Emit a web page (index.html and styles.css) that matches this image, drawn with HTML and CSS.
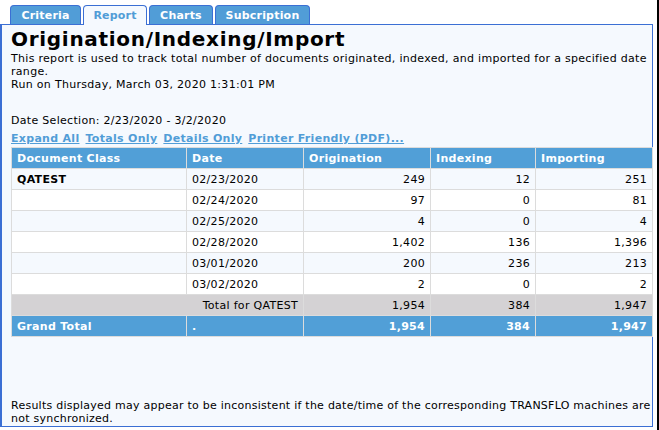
FILE: index.html
```html
<!DOCTYPE html>
<html>
<head>
<meta charset="utf-8">
<link rel="stylesheet" href="styles.css">
</head>
<body>
<div class="window">
  <div class="tabs">
    <div class="tab">Criteria</div>
    <div class="tab active">Report</div>
    <div class="tab">Charts</div>
    <div class="tab">Subcription</div>
  </div>
  <div class="panel">
    <h1 class="title">Origination/Indexing/Import</h1>
    <p class="desc">This report is used to track total number of documents originated, indexed, and imported for a specified date range.<br>Run on Thursday, March 03, 2020 1:31:01 PM</p>
    <p class="selection">Date Selection: 2/23/2020 - 3/2/2020</p>
    <div class="links">
      <a href="#">Expand All</a>
      <a href="#">Totals Only</a>
      <a href="#">Details Only</a>
      <a href="#">Printer Friendly (PDF)...</a>
    </div>
    <table class="grid">
      <colgroup>
        <col class="c1"><col class="c2"><col class="c3"><col class="c4"><col class="c5">
      </colgroup>
      <thead>
        <tr><th>Document Class</th><th>Date</th><th>Origination</th><th>Indexing</th><th>Importing</th></tr>
      </thead>
      <tbody>
        <tr class="alt"><td class="cls">QATEST</td><td>02/23/2020</td><td class="num">249</td><td class="num">12</td><td class="num">251</td></tr>
        <tr><td></td><td>02/24/2020</td><td class="num">97</td><td class="num">0</td><td class="num">81</td></tr>
        <tr class="alt"><td></td><td>02/25/2020</td><td class="num">4</td><td class="num">0</td><td class="num">4</td></tr>
        <tr><td></td><td>02/28/2020</td><td class="num">1,402</td><td class="num">136</td><td class="num">1,396</td></tr>
        <tr class="alt"><td></td><td>03/01/2020</td><td class="num">200</td><td class="num">236</td><td class="num">213</td></tr>
        <tr><td></td><td>03/02/2020</td><td class="num">2</td><td class="num">0</td><td class="num">2</td></tr>
        <tr class="subtotal"><td colspan="2" class="num">Total for QATEST</td><td class="num">1,954</td><td class="num">384</td><td class="num">1,947</td></tr>
        <tr class="grand"><td>Grand Total</td><td>.</td><td class="num">1,954</td><td class="num">384</td><td class="num">1,947</td></tr>
      </tbody>
    </table>
    <div class="spacer"></div>
    <p class="note">Results displayed may appear to be inconsistent if the date/time of the corresponding TRANSFLO machines are not synchronized.</p>
  </div>
</div>
</body>
</html>
```

FILE: styles.css
```css
html, body {
  margin: 0;
  padding: 0;
  background: #ffffff;
}
body {
  font-family: "DejaVu Sans", Verdana, sans-serif;
  font-size: 11px;
  letter-spacing: 0.3px;
  color: #000;
}
.window {
  width: 657px;
  height: 430px;
  border-right: 2px solid #000;
  display: flex;
  flex-direction: column;
}
.tabs {
  display: flex;
  align-items: flex-start;
  gap: 2px;
  padding: 5px 0 0 10px;
  height: 25px;
  box-sizing: border-box;
  margin-bottom: -1px;
  position: relative;
  z-index: 1;
}
.tab {
  height: 19px;
  box-sizing: border-box;
  padding: 2px 0 0 0;
  text-align: center;
  background: #519dd7;
  border: 1px solid #3b6fd4;
  border-bottom: none;
  border-radius: 4px 4px 0 0;
  color: #fff;
  font-weight: bold;
  line-height: 16px;
  letter-spacing: 0.2px;
}
.tab:nth-child(1) { width: 71px; }
.tab:nth-child(2) { width: 64px; }
.tab:nth-child(3) { width: 64px; }
.tab:nth-child(4) { width: 95px; }
.tab.active {
  background: #f5f9fe;
  color: #519dd7;
  height: 20px;
}
.panel {
  width: 653px;
  height: 403px;
  box-sizing: border-box;
  border: 1px solid #3b6fd4;
  border-left-width: 2px;
  background: #f5f9fe;
  padding: 0 0 0 9px;
  display: flex;
  flex-direction: column;
}
.title {
  margin: 2px 0 0 0;
  font-size: 20px;
  line-height: 25px;
  font-weight: bold;
  letter-spacing: 0.7px;
}
.desc {
  margin: 0;
  line-height: 13px;
  padding-right: 2px;
}
.selection {
  margin: 23px 0 0 0;
  line-height: 13px;
}
.links {
  display: flex;
  gap: 6px;
  margin-top: 5px;
  line-height: 13px;
}
.links a {
  color: #519dd7;
  font-weight: bold;
  text-decoration: underline;
}
.grid {
  margin-top: 2px;
  width: 641px;
  border-collapse: collapse;
  table-layout: fixed;
  border: 1px solid #dcdcdc;
}
.c1 { width: 175px; }
.c2 { width: 117px; }
.c3 { width: 127px; }
.c4 { width: 105px; }
.c5 { width: 117px; }
.grid th, .grid td {
  border: 1px solid #dcdcdc;
  height: 21px;
  padding: 0 5px;
  box-sizing: border-box;
  text-align: left;
  vertical-align: middle;
  white-space: nowrap;
}
.grid th {
  background: #519fd7;
  color: #fff;
  font-weight: bold;
}
.grid tbody tr { background: #ffffff; }
.grid tbody tr.alt { background: #f5f9fe; }
.grid td.num { text-align: right; }
.grid td.cls { font-weight: bold; }
.grid tr.subtotal { background: #d4d2d4; }
.grid tr.grand {
  background: #519fd7;
  color: #fff;
  font-weight: bold;
}
.spacer { flex: 1; }
.note {
  margin: 0 0 1px 0;
  line-height: 13px;
  padding-right: 0;
  letter-spacing: 0.25px;
}
```
